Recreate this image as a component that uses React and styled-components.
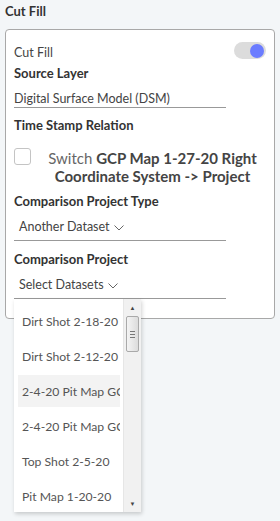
import styled, { createGlobalStyle } from 'styled-components';

const GlobalStyle = createGlobalStyle`
  body {
    margin: 0;
    background: #f3f6f8;
    font-family: Lato, 'Open Sans', sans-serif;
    color: #333;
  }
`;

const datasets = [
  'Dirt Shot 2-18-20',
  'Dirt Shot 2-12-20',
  '2-4-20 Pit Map GCP',
  '2-4-20 Pit Map GCP',
  'Top Shot 2-5-20',
  'Pit Map 1-20-20',
];

const Chevron = () => (
  <svg width="10" height="6" viewBox="0 0 10 6">
    <polyline points="0.5,0.5 5,5 9.5,0.5" fill="none" stroke="#666" strokeWidth="1" />
  </svg>
);

const App = () => {
  return (
    <Page>
      <GlobalStyle />
      <Title>Cut Fill</Title>
      <Panel>
        <ToggleRow>
          <span>Cut Fill</span>
          <Toggle>
            <Knob />
          </Toggle>
        </ToggleRow>
        <Label $mt={6}>Source Layer</Label>
        <TextField>Digital Surface Model (DSM)</TextField>
        <Label $mt={9}>Time Stamp Relation</Label>
        <CheckRow>
          <Checkbox />
          <CheckText>
            Switch <b>GCP Map 1-27-20 Right Coordinate System -&gt; Project</b>
          </CheckText>
        </CheckRow>
        <Label $mt={8}>Comparison Project Type</Label>
        <Select>
          Another Dataset <Chevron />
        </Select>
        <Label $mt={10}>Comparison Project</Label>
        <SelectWrap>
          <Select>
            Select Datasets <Chevron />
          </Select>
          <Menu>
            <MenuList>
              {datasets.map((name, i) => (
                <MenuItem key={i} $active={i === 2}>
                  {name}
                </MenuItem>
              ))}
            </MenuList>
            <ScrollBar>
              <Arrow>▲</Arrow>
              <Thumb>
                <Grip />
                <Grip />
                <Grip />
              </Thumb>
              <Track />
              <Arrow>▼</Arrow>
            </ScrollBar>
          </Menu>
        </SelectWrap>
      </Panel>
    </Page>
  );
};

export default App;

const Page = styled.div`
  width: 280px;
  height: 521px;
  padding: 3px 5px 0;
  box-sizing: border-box;
`;

const Title = styled.div`
  font-size: 13px;
  font-weight: 700;
  line-height: 16px;
  color: #333;
`;

const Panel = styled.div`
  margin-top: 10px;
  width: 270px;
  height: 290px;
  box-sizing: border-box;
  background: #fff;
  border: 1px solid #a8a8a8;
  border-radius: 4px;
  padding: 12px 8px 0;
`;

const ToggleRow = styled.div`
  display: flex;
  align-items: center;
  justify-content: space-between;
  height: 17px;
  font-size: 12.5px;
  color: #444;

  span {
    margin-top: 4px;
  }
`;

const Toggle = styled.div`
  width: 32px;
  height: 17px;
  border-radius: 9px;
  background: #dcdcdc;
  display: flex;
  align-items: center;
  justify-content: flex-end;
  padding-right: 2px;
  box-sizing: border-box;
`;

const Knob = styled.div`
  width: 14px;
  height: 14px;
  border-radius: 50%;
  background: #6b7cff;
`;

const Label = styled.div`
  margin-top: ${(p) => p.$mt}px;
  font-size: 13px;
  font-weight: 700;
  line-height: 16px;
  color: #333;
`;

const TextField = styled.div`
  margin-top: 10px;
  width: 212px;
  font-size: 12.5px;
  line-height: 16px;
  color: #444;
  border-bottom: 1px solid #999;
`;

const CheckRow = styled.div`
  margin-top: 14px;
  display: flex;
  align-items: flex-start;
`;

const Checkbox = styled.div`
  margin-top: 1px;
  width: 17px;
  height: 17px;
  box-sizing: border-box;
  border: 1px solid #c4c4c4;
  border-radius: 3px;
  flex-shrink: 0;
`;

const CheckText = styled.div`
  flex: 1;
  padding: 2px 0 0 8px;
  text-align: center;
  font-size: 15px;
  line-height: 18px;
  color: #666;

  b {
    color: #444;
  }
`;

const Select = styled.div`
  margin-top: 10px;
  width: 212px;
  box-sizing: border-box;
  padding: 0 5px 5px;
  display: flex;
  align-items: center;
  gap: 4px;
  font-size: 12.5px;
  line-height: 16px;
  color: #444;
  border-bottom: 1px solid #999;

  svg {
    margin-top: 1px;
  }
`;

const SelectWrap = styled.div`
  position: relative;
`;

const Menu = styled.div`
  position: absolute;
  top: 100%;
  left: 0;
  width: 127px;
  height: 213px;
  background: #fff;
  display: flex;
  box-shadow: 1px 2px 4px rgba(0, 0, 0, 0.18);
  z-index: 2;
`;

const MenuList = styled.div`
  width: 109px;
  overflow: hidden;
  padding-top: 6px;
  box-sizing: border-box;
  display: flex;
  flex-direction: column;
  gap: 3px;
`;

const MenuItem = styled.div`
  margin-left: 4px;
  width: 102px;
  height: 32px;
  flex-shrink: 0;
  padding-left: 4px;
  box-sizing: border-box;
  display: flex;
  align-items: center;
  white-space: nowrap;
  overflow: hidden;
  font-size: 12.2px;
  color: #555;
  background: ${(p) => (p.$active ? '#f3f3f3' : 'transparent')};
`;

const ScrollBar = styled.div`
  width: 17px;
  margin-left: auto;
  background: #f1f1f1;
  border-left: 1px solid #e6e6e6;
  display: flex;
  flex-direction: column;
  align-items: center;
`;

const Arrow = styled.div`
  height: 17px;
  font-size: 6px;
  line-height: 17px;
  color: #444;
`;

const Thumb = styled.div`
  width: 13px;
  height: 36px;
  box-sizing: border-box;
  border: 1px solid #a9a9a9;
  border-radius: 2px;
  background: linear-gradient(to right, #f4f4f4, #dcdcdc);
  display: flex;
  flex-direction: column;
  justify-content: center;
  align-items: center;
  gap: 2px;
`;

const Grip = styled.div`
  width: 5px;
  height: 1px;
  background: #777;
`;

const Track = styled.div`
  flex: 1;
`;
